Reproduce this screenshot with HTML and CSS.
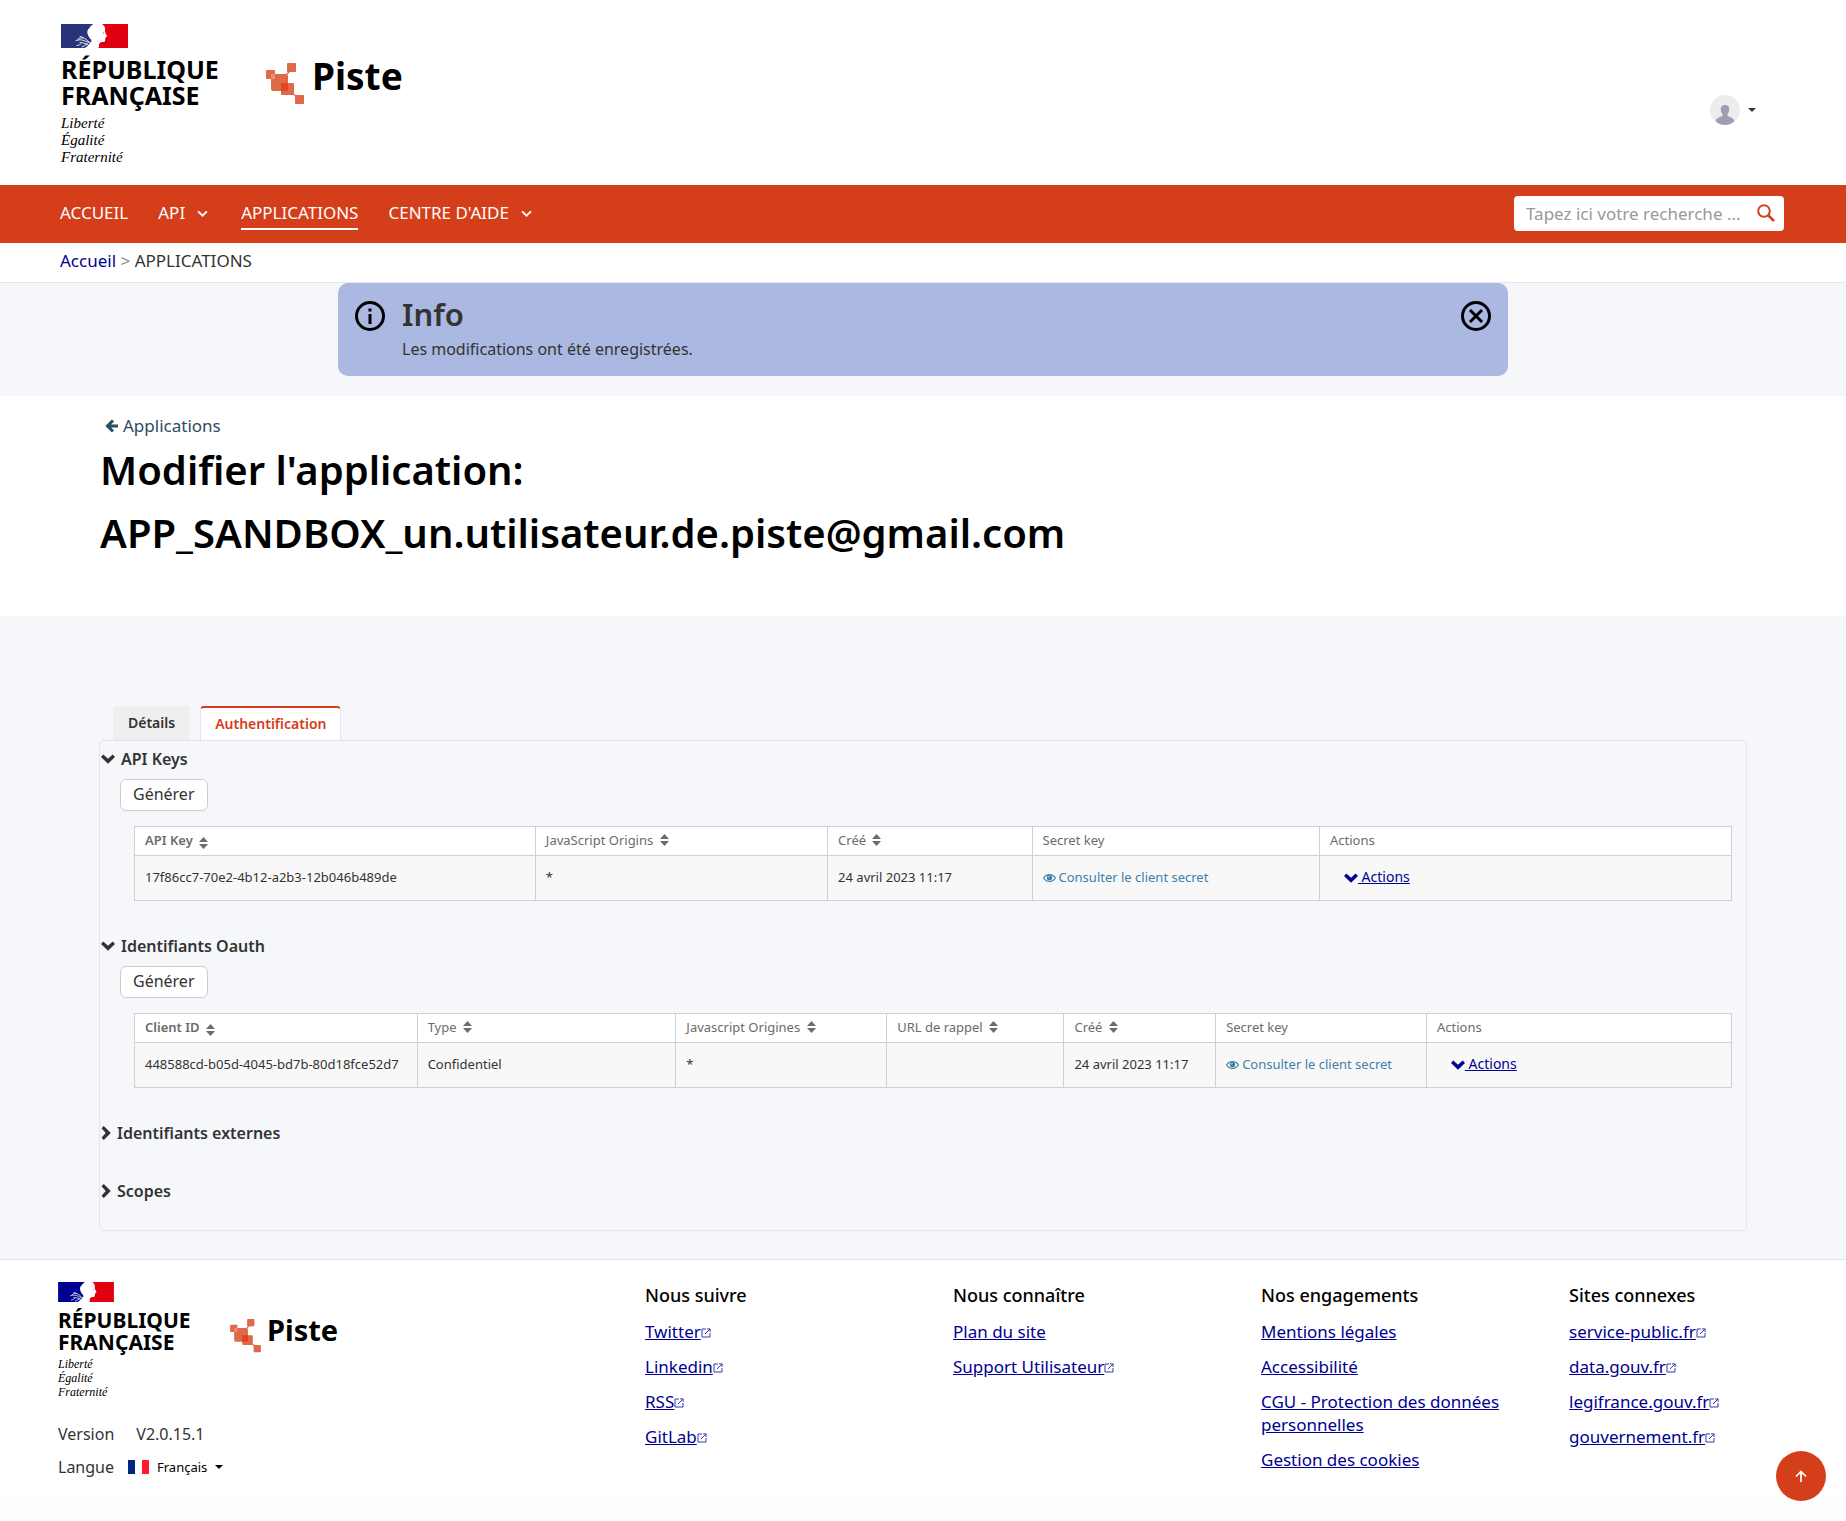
FILE: index.html
```html
<!DOCTYPE html>
<html lang="fr">
<head>
<meta charset="utf-8">
<meta name="viewport" content="width=device-width, initial-scale=1">
<title>Piste - Modifier l'application</title>
<link rel="stylesheet" href="styles.css">
</head>
<body>
<svg class="sprite" aria-hidden="true">
  <symbol id="marianne" viewBox="0 0 67 24">
    <path fill="#fff" d="M0 0h67v24H0z"/>
    <path fill="currentColor" d="M0 0h32c-1 1.500-3 2-3.500 4-2 1-2.500 3.500-2 5.500.3 2 1.500 3 2 4.500 1 1 2 1.500 2 3-1 1.500-1.500 2-2.500 3.500-1.500 1.500-3 3-5 3.500H0z"/>
    <path fill="none" stroke="#fff" stroke-width=".9" stroke-linecap="round" d="M28 18c-3-3-6-5-9-5.500M15 16.500c3-1 6-1 9 .5s4 1.500 5 1.500M17 15c2-1 3-1.500 5-1M16 21.500c2 0 3-1 4-2M21 23c1.500-.5 3-2 5-3M19 18.500c2 0 5 1 8 2"/>
    <path fill="#e1000f" d="M67 0H41c1.500 1.200 3 2.500 3 4.500.3 1.500-.2 2.500.3 4 .5 1.600 1.500 2.500 1.700 4-.3.700-1.500.5-1.600 1.200.3.800.1 1.300-.4 1.700.3 1.500 0 2.300-1.500 2.600-1.500-.2-3 .1-3.800 1.200-.8 1.100-.7 1.800-.7 2.300.7 1-.3 1.500-.8 2.500H67z"/>
    <circle cx="42.500" cy="9" r=".7" fill="#888"/>
  </symbol>
  <symbol id="piste" viewBox="0 0 38 42">
    <g fill="#d9512c" fill-opacity=".86">
      <rect y="7" width="9" height="9" rx="1"/>
      <rect x="21" width="9" height="9" rx="1"/>
      <rect x="5" y="11" width="17" height="17" rx="2"/>
      <rect x="15" y="20" width="13" height="12" rx="1"/>
      <rect x="29" y="32" width="9" height="9" rx="1"/>
      <rect x="5" y="11" width="4" height="5" fill="#e89a80"/>
      <rect x="15" y="20" width="7" height="8" fill="#e04420"/>
    </g>
    <path stroke="#dd6a4b" d="M20 12l4-4M26 30l5 4" stroke-width="1.400"/>
  </symbol>
  <symbol id="angle" viewBox="0 0 10 6"><path d="M1 1l4 4 4-4" fill="none" stroke="currentColor" stroke-width="1.700"/></symbol>
  <symbol id="caret" viewBox="0 0 8 4"><path d="M0 0h8L4 4z" fill="currentColor"/></symbol>
  <symbol id="down" viewBox="0 0 14 10"><path d="M0 3L2.300.500l4.700 4.200L11.700.500 14 3 7 9.800z" fill="currentColor"/></symbol>
  <symbol id="right" viewBox="0 0 10 14"><path d="M2.800 0L.500 2.300 4.700 7 .5 11.700 2.800 14 9.800 7z" fill="currentColor"/></symbol>
  <symbol id="sort" viewBox="0 0 9 12"><path d="M4.500 0L9 5H0zM0 7h9l-4.500 5z" fill="currentColor"/></symbol>
  <symbol id="eye" viewBox="0 0 14 10"><path d="M.6 5C3.500.2 10.500.2 13.400 5 10.500 9.800 3.500 9.800.6 5z" fill="none" stroke="currentColor" stroke-width="1.200"/><circle cx="7" cy="4.600" r="2.900" fill="currentColor"/><path d="M5.600 4.500c0-1 .6-1.500 1.500-1.500" stroke="#fff" stroke-width=".8" fill="none"/></symbol>
  <symbol id="ext" viewBox="0 0 10 10"><path d="M5 1H1v8h8V5M6 .900h3.100V4M9 1L4 6" fill="none" stroke="currentColor" stroke-width="1"/></symbol>
</svg>

<header class="header">
  <a class="brand" href="#">
    <span class="republic">
      <svg class="republic-flag"><use href="#marianne"/></svg>
      <span class="republic-name">RÉPUBLIQUE<br>FRANÇAISE</span>
      <span class="republic-motto">Liberté<br>Égalité<br>Fraternité</span>
    </span>
    <span class="piste"><svg class="piste-icon"><use href="#piste"/></svg><span>Piste</span></span>
  </a>
  <button class="user" type="button" aria-label="Mon compte">
    <svg class="avatar" viewBox="0 0 30 30"><circle cx="15" cy="15" r="15" fill="#ececec"/><path fill="#9f9db3" d="M15 10c3 0 4.500 1.800 4.300 4.600-.1 2-.9 3.300-1.800 4.200v2.200c3.500 1.300 6.300 2 6.700 5.500C21.500 29 18.500 30 15 30s-6.500-1-9.200-3.500c.4-3.500 3.200-4.200 6.700-5.500v-2.200c-.9-.9-1.700-2.200-1.800-4.200C10.500 11.800 12 10 15 10z"/></svg>
    <svg class="caret"><use href="#caret"/></svg>
  </button>
</header>

<nav class="nav">
  <ul class="menu">
    <li><a href="#">ACCUEIL</a></li>
    <li><a href="#">API <svg class="angle"><use href="#angle"/></svg></a></li>
    <li><a class="current" href="#">APPLICATIONS</a></li>
    <li><a href="#">CENTRE D'AIDE <svg class="angle"><use href="#angle"/></svg></a></li>
  </ul>
  <form class="search">
    <input type="text" placeholder="Tapez ici votre recherche ..." aria-label="Rechercher">
    <button type="button" aria-label="Lancer la recherche"><svg viewBox="0 0 18 18"><circle cx="7" cy="7" r="5.800" fill="none" stroke="currentColor" stroke-width="2"/><path d="M11 11l6 6" stroke="currentColor" stroke-width="2.500"/></svg></button>
  </form>
</nav>

<div class="breadcrumb"><a href="#">Accueil</a> <span class="sep">&gt;</span> <span>APPLICATIONS</span></div>

<div class="notice">
  <div class="alert" role="status">
    <svg class="alert-icon" viewBox="0 0 30 30"><circle cx="15" cy="15" r="13.500" fill="none" stroke="#000" stroke-width="3"/><path d="M13.500 7.500h3v3h-3zM13.500 13h3v10h-3z"/></svg>
    <div class="alert-body">
      <h2>Info</h2>
      <p>Les modifications ont été enregistrées.</p>
    </div>
    <button class="alert-close" type="button" aria-label="Fermer"><svg class="alert-icon" viewBox="0 0 30 30"><path d="M9 9l12 12M21 9L9 21" stroke="#000" stroke-width="3"/><circle cx="15" cy="15" r="13.500" fill="none" stroke="#000" stroke-width="3"/></svg></button>
  </div>
</div>

<section class="title">
  <a class="back" href="#"><svg viewBox="0 0 13 14"><path d="M8 1.500L2.500 7 8 12.500M3 7h10" fill="none" stroke="currentColor" stroke-width="3"/></svg>Applications</a>
  <h1>Modifier l'application:<br>APP_SANDBOX_un.utilisateur.de.piste@gmail.com</h1>
</section>

<main class="main">
  <div class="tabs" role="tablist">
    <button class="tab" type="button" role="tab">Détails</button>
    <button class="tab active" type="button" role="tab" aria-selected="true">Authentification</button>
  </div>
  <div class="panel">
    <details open>
      <summary><svg class="down"><use href="#down"/></svg>API Keys</summary>
      <button class="generate" type="button">Générer</button>
      <table class="keys">
        <thead><tr>
          <th class="sorted">API Key <svg class="sort"><use href="#sort"/></svg></th>
          <th>JavaScript Origins <svg class="sort"><use href="#sort"/></svg></th>
          <th>Créé <svg class="sort"><use href="#sort"/></svg></th>
          <th>Secret key</th>
          <th>Actions</th>
        </tr></thead>
        <tbody><tr>
          <td>17f86cc7-70e2-4b12-a2b3-12b046b489de</td>
          <td>*</td>
          <td>24 avril 2023 11:17</td>
          <td><a class="secret" href="#"><svg class="eye"><use href="#eye"/></svg>Consulter le client secret</a></td>
          <td><a class="actions" href="#"><svg class="down"><use href="#down"/></svg>&nbsp;Actions</a></td>
        </tr></tbody>
      </table>
    </details>
    <details open>
      <summary><svg class="down"><use href="#down"/></svg>Identifiants Oauth</summary>
      <button class="generate" type="button">Générer</button>
      <table class="oauth">
        <thead><tr>
          <th class="sorted">Client ID <svg class="sort"><use href="#sort"/></svg></th>
          <th>Type <svg class="sort"><use href="#sort"/></svg></th>
          <th>Javascript Origines <svg class="sort"><use href="#sort"/></svg></th>
          <th>URL de rappel <svg class="sort"><use href="#sort"/></svg></th>
          <th>Créé <svg class="sort"><use href="#sort"/></svg></th>
          <th>Secret key</th>
          <th>Actions</th>
        </tr></thead>
        <tbody><tr>
          <td>448588cd-b05d-4045-bd7b-80d18fce52d7</td>
          <td>Confidentiel</td>
          <td>*</td>
          <td></td>
          <td>24 avril 2023 11:17</td>
          <td><a class="secret" href="#"><svg class="eye"><use href="#eye"/></svg>Consulter le client secret</a></td>
          <td><a class="actions" href="#"><svg class="down"><use href="#down"/></svg>&nbsp;Actions</a></td>
        </tr></tbody>
      </table>
    </details>
    <details><summary><svg class="right"><use href="#right"/></svg>Identifiants externes</summary></details>
    <details><summary><svg class="right"><use href="#right"/></svg>Scopes</summary></details>
  </div>
</main>

<footer class="footer">
  <div>
    <a class="brand small" href="#">
      <span class="republic">
        <svg class="republic-flag"><use href="#marianne"/></svg>
        <span class="republic-name">RÉPUBLIQUE<br>FRANÇAISE</span>
        <span class="republic-motto">Liberté<br>Égalité<br>Fraternité</span>
      </span>
      <span class="piste"><svg class="piste-icon"><use href="#piste"/></svg><span>Piste</span></span>
    </a>
    <p class="version"><span>Version</span><span>V2.0.15.1</span></p>
    <p class="language">
      <label for="language">Langue</label>
      <svg class="fr" viewBox="0 0 21 14"><path fill="#002680" d="M0 0h7v14H0z"/><path fill="#ff1a2c" d="M14 0h7v14h-7z"/></svg>
      <select id="language"><option>Français</option></select>
      <svg class="caret"><use href="#caret"/></svg>
    </p>
  </div>
  <div class="links">
    <h3>Nous suivre</h3>
    <ul>
      <li><a href="#">Twitter</a><svg class="ext"><use href="#ext"/></svg></li>
      <li><a href="#">Linkedin</a><svg class="ext"><use href="#ext"/></svg></li>
      <li><a href="#">RSS</a><svg class="ext"><use href="#ext"/></svg></li>
      <li><a href="#">GitLab</a><svg class="ext"><use href="#ext"/></svg></li>
    </ul>
  </div>
  <div class="links">
    <h3>Nous connaître</h3>
    <ul>
      <li><a href="#">Plan du site</a></li>
      <li><a href="#">Support Utilisateur</a><svg class="ext"><use href="#ext"/></svg></li>
    </ul>
  </div>
  <div class="links">
    <h3>Nos engagements</h3>
    <ul>
      <li><a href="#">Mentions légales</a></li>
      <li><a href="#">Accessibilité</a></li>
      <li><a href="#">CGU - Protection des données personnelles</a></li>
      <li><a href="#">Gestion des cookies</a></li>
    </ul>
  </div>
  <div class="links">
    <h3>Sites connexes</h3>
    <ul>
      <li><a href="#">service-public.fr</a><svg class="ext"><use href="#ext"/></svg></li>
      <li><a href="#">data.gouv.fr</a><svg class="ext"><use href="#ext"/></svg></li>
      <li><a href="#">legifrance.gouv.fr</a><svg class="ext"><use href="#ext"/></svg></li>
      <li><a href="#">gouvernement.fr</a><svg class="ext"><use href="#ext"/></svg></li>
    </ul>
  </div>
</footer>

<a class="to-top" href="#" aria-label="Haut de page"><svg viewBox="0 0 12 12"><path d="M6 12V1.500M1 6.500l5-5 5 5" fill="none" stroke="currentColor" stroke-width="1.700"/></svg></a>
</body>
</html>
```

FILE: styles.css
```css
* { box-sizing: border-box; }

body {
  margin: 0;
  background: #fdfdfd;
  color: #333;
  font: 16px/24px "Noto Sans", sans-serif;
}

h1, h2, h3, p, ul { margin: 0; padding: 0; }
ul { list-style: none; }
a { color: #000091; }
button, input, select { font: inherit; color: inherit; border: 0; background: none; padding: 0; }
svg { flex: none; }
.sprite { display: none; }

/* Brand block, shared by the header and the footer */
.brand { display: flex; align-items: flex-start; gap: 47px; color: #000; text-decoration: none; }
.republic { display: flex; flex-direction: column; color: #000; width: 158px; }
.republic-flag { width: 67px; height: 24px; color: #27337a; }
.republic-name { margin-top: 8px; font-size: 25px; line-height: 26px; font-weight: 700; }
.republic-motto { margin-top: 7px; font: italic 15px/17px "Liberation Serif", serif; }
.piste { display: flex; align-items: flex-start; gap: 8px; margin-top: 30px; font-size: 37px; line-height: 44px; font-weight: 700; }
.piste-icon { width: 38px; height: 42px; margin-top: 9px; }

.small { gap: 40px; }
.small .republic { width: 132px; }
.small .republic-flag { width: 56px; height: 20px; color: #000091; }
.small .republic-name { margin-top: 7px; font-size: 21px; line-height: 22px; }
.small .republic-motto { margin-top: 4px; font-size: 12px; line-height: 14px; }
.small .piste { gap: 6px; margin-top: 30px; font-size: 29px; line-height: 36px; }
.small .piste-icon { width: 31px; height: 34px; margin-top: 7px; }

.header { display: flex; justify-content: space-between; align-items: center; background: #fff; padding: 24px 90px 19px 61px; }
.user { display: flex; align-items: center; gap: 8px; margin-top: 30px; }
.avatar { width: 30px; height: 30px; }
.caret { width: 8px; height: 4px; }

.nav { display: flex; justify-content: space-between; align-items: flex-start; min-height: 58px; padding: 11px 62px 10px 60px; background: #d43e1a; }
.menu { display: flex; gap: 30px; padding-top: 4px; }
.menu a { display: flex; align-items: center; gap: 12px; padding-bottom: 2px; border-bottom: 2px solid transparent; color: #fff; font-size: 17px; line-height: 26px; text-decoration: none; }
.menu .current { border-color: #fff; }
.angle { width: 11px; height: 7px; margin-right: 3px; }
.search { display: flex; width: 270px; height: 35px; border-radius: 4px; background: #fff; }
.search input { flex: 1; min-width: 0; padding-left: 12px; font-size: 17px; outline: 0; }
.search input::placeholder { color: #999; opacity: 1; }
.search button { width: 36px; color: #d43e1a; line-height: 1; }
.search svg { width: 18px; height: 18px; }

.breadcrumb { background: #fff; border-bottom: 1px solid #e5e7ea; padding: 1px 60px 4px; font-size: 17px; line-height: 34px; }
.breadcrumb a { text-decoration: none; }
.sep { color: #888; }

.notice { padding-bottom: 20px; background: #f5f7fb; }
.alert { display: flex; align-items: flex-start; gap: 17px; max-width: 1170px; margin: 0 auto; padding: 13px 17px 15px; border-radius: 10px; background: #abb8e1; }
.alert-icon { display: block; width: 30px; height: 30px; margin-top: 5px; }
.alert-body { flex: 1; }
.alert h2 { font-size: 31px; line-height: 36px; font-weight: 600; }
.alert p { margin-top: 5px; }

.title { background: #fff; padding: 18px 100px 52px; }
.back { display: flex; align-items: center; gap: 5px; margin-left: 5px; color: #2b4b63; font-size: 17px; text-decoration: none; }
.back svg { width: 13px; height: 14px; }
.title h1 { color: #000; font-size: 40px; line-height: 63px; font-weight: 600; }

.main { padding: 90px 99px 28px; background: #f5f7fb; }
.tabs { display: flex; gap: 10px; padding-left: 14px; }
.tab { height: 34px; padding: 0 15px; border-radius: 4px 4px 0 0; background: #efefef; font-size: 14px; font-weight: 600; }
.tab.active { padding: 0 14px; border: 1px solid #e3e5e8; border-top: 2px solid #d43e1a; border-bottom: 0; background: #fff; color: #d43e1a; }
.panel { border: 1px solid #e3e5e8; border-radius: 5px; padding: 6px 14px 0 0; }
details { margin-bottom: 34px; }
details[open] { margin-bottom: 33px; }
details:last-child { margin-bottom: 27px; }
summary { display: flex; align-items: center; gap: 6px; padding-left: 1px; font-weight: 600; list-style: none; }
.down { width: 14px; height: 10px; }
.right { width: 10px; height: 14px; }
.generate { display: block; height: 32px; margin: 8px 0 15px 20px; padding: 0 12px 2px; border: 1px solid #ccc; border-radius: 6px; background: #fff; }

table { width: calc(100% - 34px); margin-left: 34px; border-collapse: collapse; table-layout: fixed; font-size: 13px; text-align: left; }
th, td { border: 1px solid #d0d0d0; padding: 0 10px 2px; white-space: nowrap; }
th { height: 29px; background: #fff; color: #6b6b6b; font-weight: 400; }
td { height: 45px; background: #f8f8f8; }
.sorted { font-weight: 600; }
.sort { width: 9px; height: 12px; margin-left: 3px; vertical-align: -1px; }
.sorted .sort { vertical-align: -4px; }
.keys th:nth-child(1) { width: 25.1%; }
.keys th:nth-child(2) { width: 18.3%; }
.keys th:nth-child(3) { width: 12.8%; }
.keys th:nth-child(4) { width: 18%; }
.oauth th:nth-child(1) { width: 17.7%; }
.oauth th:nth-child(2) { width: 16.2%; }
.oauth th:nth-child(3) { width: 13.2%; }
.oauth th:nth-child(4) { width: 11.1%; }
.oauth th:nth-child(5) { width: 9.5%; }
.oauth th:nth-child(6) { width: 13.2%; }
.secret { color: #3f7fa8; text-decoration: none; }
.eye { width: 13px; height: 10px; margin-right: 3px; vertical-align: -1px; }
.actions { margin-left: 14px; font-size: 14px; }
.actions .down { vertical-align: -1px; }

.footer { display: grid; grid-template-columns: 587fr 308fr 308fr 308fr 219fr; border-top: 1px solid #e1e5ea; background: #fff; padding: 22px 58px 18px; }
.version { display: flex; gap: 22px; margin-top: 23px; }
.language { display: flex; align-items: center; margin-top: 9px; color: #333; }
.fr { width: 21px; height: 14px; margin: 0 8px 0 14px; }
.language select { appearance: none; margin-right: 7px; color: #000; font-size: 13px; }
.language .caret { color: #000; }
.links h3 { color: #000; font-size: 18px; line-height: 27px; font-weight: 500; }
.links ul { display: grid; gap: 12px; margin-top: 11px; }
.links li { font-size: 17px; line-height: 23px; }
.ext { width: 10px; height: 10px; color: #3b3bab; }

.to-top { position: fixed; right: 20px; bottom: 20px; display: flex; align-items: center; justify-content: center; width: 50px; height: 50px; border-radius: 50%; background: #d43e1a; color: #fff; }
.to-top svg { width: 12px; height: 12px; }
```
